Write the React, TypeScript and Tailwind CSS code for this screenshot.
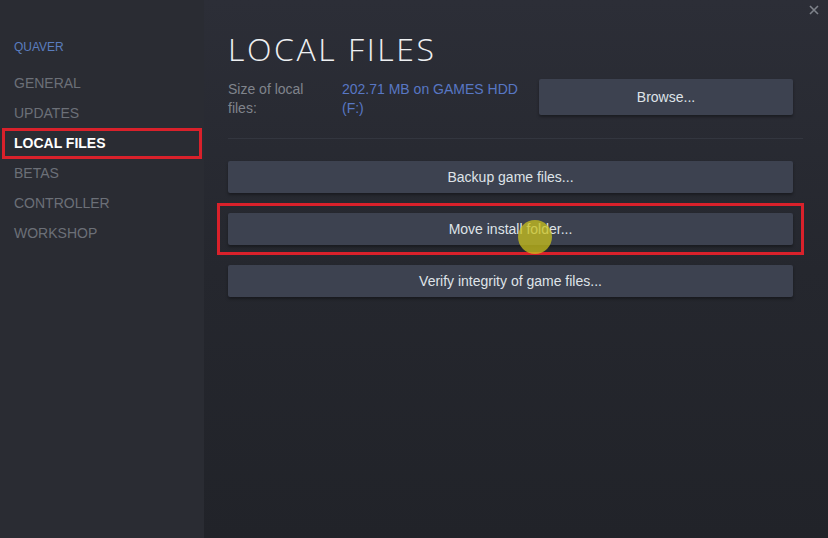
import React from "react";

const navItems = ["GENERAL", "UPDATES", "LOCAL FILES", "BETAS", "CONTROLLER", "WORKSHOP"];

const SteamButton: React.FC<{ label: string; className?: string }> = ({ label, className }) => (
  <div
    className={
      "h-[32px] flex items-center justify-center bg-[#3d4250] rounded-[2px] text-[14px] text-[#dfe3e8] shadow-[0_2px_3px_rgba(0,0,0,0.35)] " +
      (className || "")
    }
  >
    {label}
  </div>
);

export default function App() {
  return (
    <div
      className="w-[828px] h-[538px] flex overflow-hidden bg-[#25272e] relative"
      style={{ fontFamily: '"Liberation Sans", Arial, sans-serif' }}
    >
      {/* sidebar */}
      <div className="w-[204px] shrink-0 bg-[#2a2c33] pt-[38px]">
        <div className="px-[14px] text-[12px] text-[#5a7dbf] mb-[12px]">QUAVER</div>
        <div className="flex flex-col">
          {navItems.map((item) =>
            item === "LOCAL FILES" ? (
              <div
                key={item}
                className="mx-[2px] h-[31px] flex items-center px-[9px] border-[3px] border-[#d9212b] text-[14px] font-bold text-white -my-[0.5px]"
              >
                {item}
              </div>
            ) : (
              <div key={item} className="h-[30px] flex items-center px-[14px] text-[14px] text-[#6c7078]">
                {item}
              </div>
            )
          )}
        </div>
      </div>

      {/* main */}
      <div className="flex-1 bg-gradient-to-b from-[#2c2e37] via-[#25272e] to-[#212329] pl-[24px] pr-[35px] pt-[29px] relative">
        <div
          className="text-[32px] font-light tracking-[0.08em] text-[#eef0f2] leading-[40px]"
          style={{ fontFamily: '"Open Sans", "Liberation Sans", sans-serif' }}
        >
          LOCAL FILES
        </div>

        <div className="flex items-start mt-[11px]">
          <div className="w-[114px] text-[14px] leading-[19px] text-[#80848c]">
            Size of local
            <br />
            files:
          </div>
          <div className="w-[197px] text-[14px] leading-[19px] text-[#5877c4]">
            202.71 MB on GAMES HDD
            <br />
            (F:)
          </div>
          <SteamButton label="Browse..." className="flex-1 h-[36px] -mt-[1px]" />
        </div>

        <div className="h-px bg-[#33363f] mt-[20px] -mr-[10px]" />

        <div className="flex flex-col mt-[22px]">
          <SteamButton label="Backup game files..." />
          <div className="-mx-[11px] mt-[10px] px-[8px] py-[7px] border-[3px] border-[#d9212b]">
            <SteamButton label="Move install folder..." />
          </div>
          <SteamButton label="Verify integrity of game files..." className="mt-[10px]" />
        </div>

        {/* cursor highlight */}
        <div className="absolute left-[314px] top-[220px] w-[34px] h-[34px] rounded-full bg-[#c9c21c]/75" />

        {/* close */}
        <svg className="absolute right-[8px] top-[4px]" width="12" height="12" viewBox="0 0 12 12">
          <path d="M2 2 L10 10 M10 2 L2 10" stroke="#7f838b" strokeWidth="1.6" />
        </svg>
      </div>
    </div>
  );
}
